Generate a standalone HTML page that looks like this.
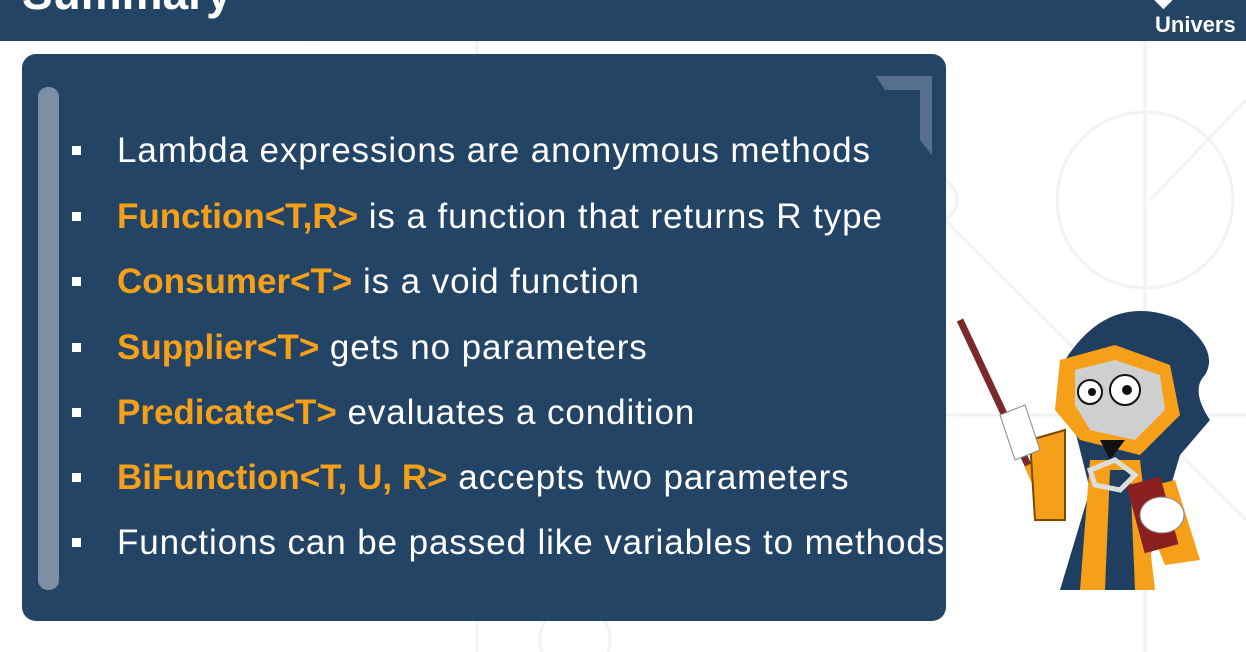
<!DOCTYPE html>
<html><head><meta charset="utf-8"><style>
body{margin:0;width:1246px;height:652px;overflow:hidden;background:#fff;position:relative;font-family:"Liberation Sans",sans-serif}
.hdr{position:absolute;left:0;top:0;width:1246px;height:41px;background:#234465;overflow:hidden}
.title{position:absolute;left:22px;top:-34px;color:#fff;font-size:46px;font-weight:bold}
.uni{position:absolute;left:1155px;top:-14px;color:#fff;font-size:22px;font-weight:bold}
.panel{position:absolute;left:22px;top:54px;width:924px;height:567px;background:#234465;border-radius:14px}
.bar{position:absolute;left:38px;top:87px;width:21px;height:503px;background:#7c8fa5;border-radius:10px}
ul{position:absolute;left:0;top:131px;margin:0;padding:0;list-style:none}
li{position:absolute;left:117px;white-space:nowrap;color:#fff;font-size:35px;line-height:40px;letter-spacing:0.9px}
li:before{content:"";position:absolute;left:-45px;top:15px;width:9px;height:9px;background:#fff}
b{color:#f6a019;letter-spacing:0}
</style></head><body>
<svg width="1246" height="652" style="position:absolute;left:0;top:0">
<g fill="none" stroke="#f1f2f5" stroke-width="3">
<circle cx="1145" cy="200" r="88"/><circle cx="125" cy="15" r="25"/><circle cx="310" cy="15" r="25"/>
<circle cx="575" cy="640" r="35"/><circle cx="935" cy="200" r="22"/>
<line x1="1246" y1="100" x2="1150" y2="200"/><line x1="945" y1="220" x2="1246" y2="520"/>
<line x1="477" y1="40" x2="477" y2="652"/><line x1="1145" y1="40" x2="1145" y2="652"/>
<line x1="945" y1="415" x2="1246" y2="415"/>
</g></svg>
<div class="hdr"><div class="title">Summary</div><div class="uni">◆ Univers</div></div>
<div class="panel"></div>
<div class="bar"></div>
<svg width="1246" height="652" style="position:absolute;left:0;top:0">
<polygon points="876,76 932,76 932,155 920,140 920,90 885,90" fill="#566f8c"/>
</svg>
<ul>
<li style="top:0">Lambda expressions are anonymous methods</li>
<li style="top:66px"><b>Function&lt;T,R&gt;</b> is a function that returns R type</li>
<li style="top:131px"><b>Consumer&lt;T&gt;</b> is a void function</li>
<li style="top:197px"><b>Supplier&lt;T&gt;</b> gets no parameters</li>
<li style="top:262px"><b>Predicate&lt;T&gt;</b> evaluates a condition</li>
<li style="top:327px"><b>BiFunction&lt;T, U, R&gt;</b> accepts two parameters</li>
<li style="top:392px">Functions can be passed like variables to methods</li>
</ul>
<svg width="306" height="320" viewBox="0 0 306 320" style="position:absolute;left:940px;top:290px">
<line x1="20" y1="30" x2="95" y2="190" stroke="#7a2a2a" stroke-width="7"/>
<line x1="88" y1="175" x2="97" y2="195" stroke="#f6a019" stroke-width="8"/>
<path d="M90 150 L125 140 L125 230 L95 230 Z" fill="#f6a019" stroke="#7a4a00" stroke-width="2"/>
<path d="M125 70 Q170 0 240 30 Q280 60 265 85 Q250 100 270 130 L240 165 L200 300 L120 300 L150 200 L130 120 Z" fill="#1f3e60"/>
<path d="M150 170 L200 170 L215 300 L140 300 Z" fill="#f6a019"/>
<path d="M170 180 L190 180 L195 300 L165 300 Z" fill="#1f3e60"/>
<path d="M120 70 L175 55 L230 75 L240 125 L200 165 L140 150 L115 120 Z" fill="#f6a019"/>
<path d="M135 80 L175 70 L220 85 L225 120 L195 150 L150 140 L135 115 Z" fill="#cfcfcf"/>
<circle cx="150" cy="102" r="12" fill="#fff" stroke="#111" stroke-width="2"/>
<circle cx="185" cy="100" r="15" fill="#fff" stroke="#111" stroke-width="2"/>
<circle cx="152" cy="102" r="4" fill="#111"/><circle cx="187" cy="100" r="5" fill="#111"/>
<path d="M160 150 L185 150 L170 170 Z" fill="#111"/>
<path d="M60 125 L85 115 L100 160 L75 170 Z" fill="#fff" stroke="#888"/>
<path d="M195 200 L235 190 L260 270 L225 275 Z" fill="#f6a019"/>
<rect x="195" y="190" width="35" height="70" fill="#8a2020" transform="rotate(-15 212 225)"/>
<ellipse cx="222" cy="225" rx="22" ry="18" fill="#fff" stroke="#888"/>
<path d="M150 180 L175 170 L195 185 L180 200 L155 195 Z" fill="none" stroke="#ddd" stroke-width="5"/>
</svg>
</body></html>
